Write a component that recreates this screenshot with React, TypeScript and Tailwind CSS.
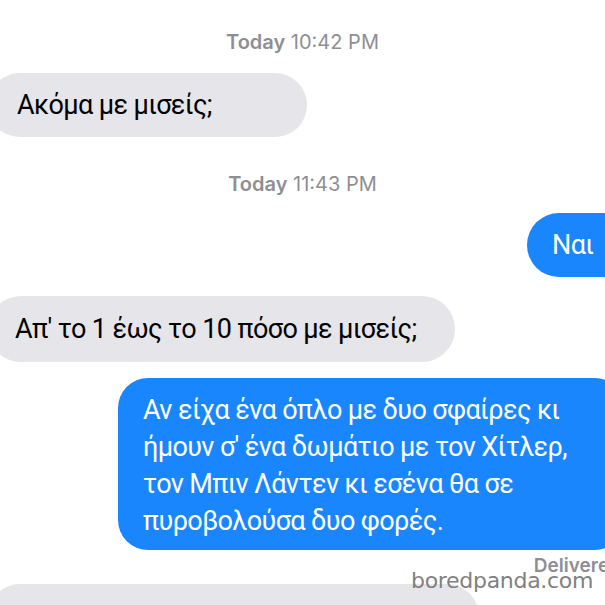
import React from "react";

export default function App() {
  const msg = "font-['Roboto',sans-serif] text-[27px] leading-[37px] tracking-[-0.6px]";
  return (
    <div className="relative w-[605px] h-[605px] overflow-hidden bg-white">
      <div className="flex flex-col pt-[31px]">
        <div className="text-center text-[20px] leading-[23px] text-[#8e8e93] font-['Inter',sans-serif]">
          <span className="font-semibold">Today</span> 10:42 PM
        </div>
        <div className="mt-[19px] flex">
          <div className={`-ml-[12px] h-[64px] w-[319px] rounded-[32px] bg-[#e5e5ea] pl-[29px] flex items-center text-black ${msg}`}>
            Ακόμα με μισείς;
          </div>
        </div>
        <div className="mt-[36px] text-center text-[20px] leading-[23px] text-[#8e8e93] font-['Inter',sans-serif]">
          <span className="font-semibold">Today</span> 11:43 PM
        </div>
        <div className="mt-[17px] flex justify-end">
          <div className={`-mr-[30px] h-[64px] w-[108px] rounded-[32px] bg-[#1a86fe] pl-[25px] flex items-center text-white ${msg}`}>
            Ναι
          </div>
        </div>
        <div className="mt-[19px] flex">
          <div className={`-ml-[12px] h-[66px] w-[467px] rounded-[33px] bg-[#e5e5ea] pl-[27px] flex items-center text-black ${msg}`}>
            Απ' το 1 έως το 10 πόσο με μισείς;
          </div>
        </div>
        <div className="mt-[16px] flex justify-end">
          <div className={`-mr-[20px] h-[172px] w-[507px] rounded-[30px] bg-[#1a86fe] pl-[25px] pr-[30px] pt-[14px] text-white ${msg}`}>
            Αν είχα ένα όπλο με δυο σφαίρες κι ήμουν σ' ένα δωμάτιο με τον Χίτλερ, τον Μπιν Λάντεν κι εσένα θα σε πυροβολούσα δυο φορές.
          </div>
        </div>
        <div className="mt-[5px] flex justify-end">
          <div className="-mr-[16px] text-[19px] leading-[22px] font-semibold text-[#8e8e93] font-['Inter',sans-serif]">
            Delivered
          </div>
        </div>
        <div className="mt-[7px] flex">
          <div className="-ml-[12px] h-[64px] w-[491px] rounded-[32px] bg-[#e5e5ea]" />
        </div>
      </div>
      <div className="absolute left-[411px] top-[568px] text-[22px] leading-[26px] text-[#808080] font-['DejaVu_Sans',sans-serif] tracking-[-0.3px]">
        boredpanda.com
      </div>
    </div>
  );
}
